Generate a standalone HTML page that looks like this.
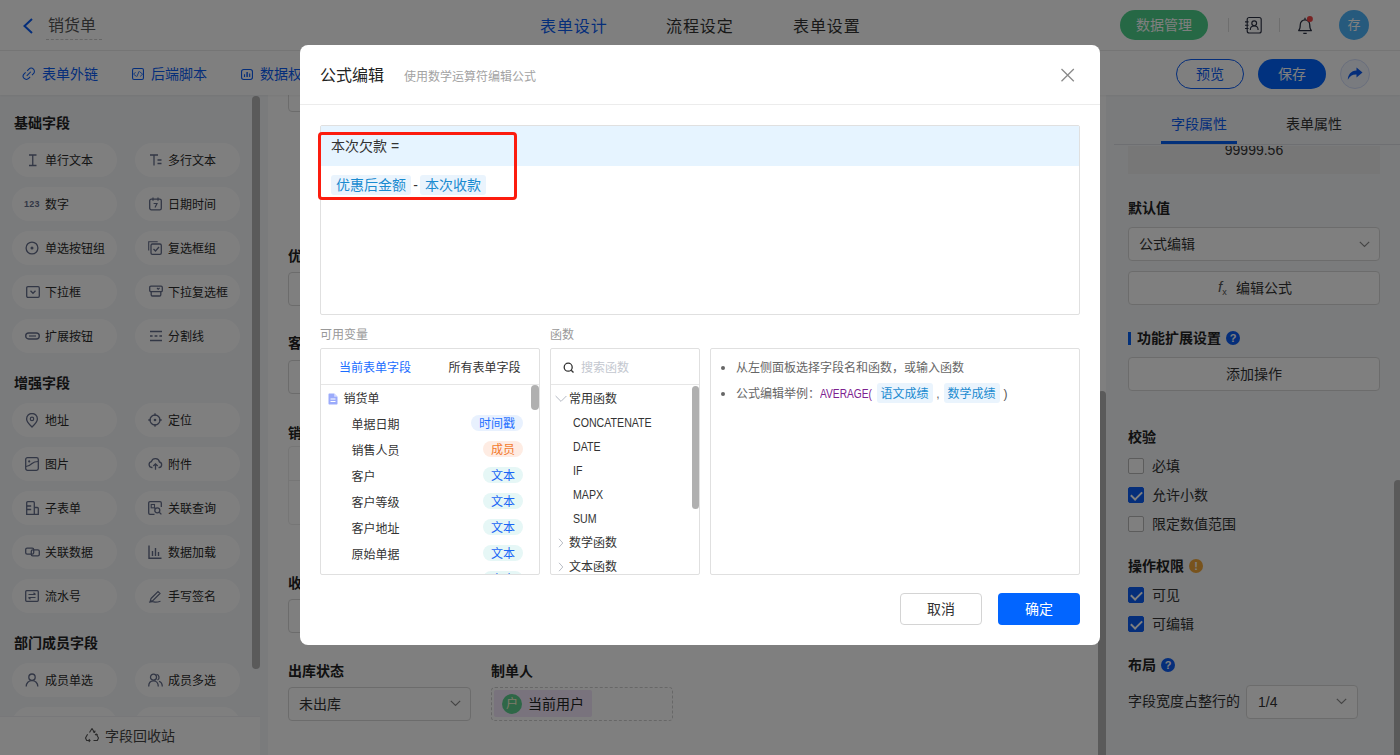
<!DOCTYPE html>
<html lang="zh-CN">
<head>
<meta charset="utf-8">
<title>销货单 - 公式编辑</title>
<style>
*{box-sizing:border-box;margin:0;padding:0}
html,body{width:1400px;height:755px;overflow:hidden;background:#fff}
body{font-family:"Liberation Sans","Noto Sans CJK SC",sans-serif;font-size:14px;color:#333;position:relative}
.abs{position:absolute}
svg{display:block}
/* ---------- page behind ---------- */
#hdr{position:absolute;left:0;top:0;width:1400px;height:51px;background:#fff;border-bottom:1px solid #ebebeb}
#bar{position:absolute;left:0;top:51px;width:1400px;height:44px;background:#fff;box-shadow:0 1px 2px rgba(0,0,0,.05);z-index:1}
#side{position:absolute;left:0;top:95px;width:268px;height:660px;background:#f4f6f9}
#canvas{position:absolute;left:268px;top:95px;width:838px;height:660px;background:#fff}
#form{position:absolute;left:268px;top:95px;width:832px;height:660px;background:#fff;overflow:hidden}
#ptrack{position:absolute;left:1098px;top:391px;width:8px;height:380px;background:#b4b4b4;border-radius:4px}
#prop{position:absolute;left:1106px;top:95px;width:294px;height:660px;background:#f4f6f9}
.t{position:absolute;white-space:nowrap;line-height:20px}
.b{font-weight:bold}
.pill{position:absolute;width:105px;height:34px;border-radius:17px;background:#fff;font-size:12px;line-height:34px;color:#2a2a2a}
.pill span{position:absolute;left:33px;top:1px;white-space:nowrap}
.pill svg{position:absolute;left:14px;top:10px}
.sec{position:absolute;left:14px;font-size:14px;font-weight:bold;color:#222;line-height:20px;white-space:nowrap}
.inp{position:absolute;border:1px solid #d9d9d9;border-radius:4px;background:#fff}
.cb{position:absolute;width:16px;height:16px;border:1px solid #b8b8b8;border-radius:2px;background:#fff}
.cb.on{background:#0a5cf5;border-color:#0a5cf5}
.cb.on:after{content:"";position:absolute;left:4px;top:1px;width:5px;height:9px;border:solid #fff;border-width:0 2px 2px 0;transform:rotate(45deg)}
.lbl{position:absolute;font-size:14px;line-height:20px;color:#333;white-space:nowrap}
.ph{position:absolute;font-size:14px;line-height:20px;font-weight:bold;color:#222;white-space:nowrap}
.qi{width:14px;height:14px;border-radius:7px;background:#0a5cf5;color:#fff;font-size:11px;font-weight:bold;line-height:14px;text-align:center;font-family:"Liberation Sans",sans-serif}
/* ---------- overlay + modal ---------- */
#mask{position:absolute;left:0;top:0;width:1400px;height:755px;background:rgba(0,0,0,.5);z-index:5}
#modal{position:absolute;left:300px;top:45px;width:800px;height:600px;background:#fff;border-radius:8px;z-index:6}
#modal .t{color:#333}
.tag{display:inline-block;background:#eaf4fd;color:#1a8bd0;border-radius:3px;padding:0 5px;height:20px;line-height:20px;vertical-align:top}
.vrow{position:absolute;left:0;width:212px;height:26px;font-size:12px;line-height:26px}
.vrow .n{position:absolute;left:30.5px;top:0;white-space:nowrap;color:#333}
.vrow .k{position:absolute;right:10px;top:3px;height:16px;line-height:18px;border-radius:8px;padding:0 8px;font-size:12px;white-space:nowrap}
.k.tx{background:#e6f7f6;color:#1a66f5}
.k.ts{background:#e8f1fe;color:#1f6fff}
.k.mb{background:#feece3;color:#f27a2e}
.fn{position:absolute;font-size:12px;line-height:24px;color:#333;white-space:nowrap}
</style>
</head>
<body>
<!-- ================= HEADER ================= -->
<div id="hdr">
  <svg class="abs" style="left:21px;top:17px" width="14" height="18" viewBox="0 0 14 18"><path d="M11 2 L3.5 9 L11 16" fill="none" stroke="#0a5cf5" stroke-width="2"/></svg>
  <div class="t" style="left:48px;top:15px;font-size:16px;line-height:22px;color:#555">销货单</div>
  <div class="abs" style="left:46px;top:39px;width:56px;border-top:1px dashed #ccc"></div>
  <div class="t" style="left:540px;top:15.5px;font-size:16px;line-height:22px;letter-spacing:.9px;color:#0a5cf5">表单设计</div>
  <div class="t" style="left:666px;top:15.5px;font-size:16px;line-height:22px;letter-spacing:.9px;color:#333">流程设定</div>
  <div class="t" style="left:793px;top:15.5px;font-size:16px;line-height:22px;letter-spacing:.9px;color:#333">表单设置</div>
  <div class="abs" style="left:1120px;top:10px;width:88px;height:30px;border-radius:15px;background:#4cd18b;color:#fff;font-size:14px;line-height:30px;text-align:center">数据管理</div>
  <div class="abs" style="left:1228px;top:18px;width:1px;height:14px;background:#ddd"></div>
  <div class="abs" style="left:1279px;top:18px;width:1px;height:14px;background:#ddd"></div>
  <svg class="abs" style="left:1244px;top:16px" width="20" height="18" viewBox="0 0 20 18"><rect x="3.200" y="1.500" width="14" height="15.500" rx="2" fill="none" stroke="#2b3042" stroke-width="1.150"/><path d="M1 5.900h3.600M1 9.200h3.600M1 12.500h3.600" stroke="#2b3042" stroke-width="1.150"/><circle cx="10.200" cy="7.300" r="2.400" fill="none" stroke="#2b3042" stroke-width="1.150"/><path d="M6.300 13.900c0-2.500 1.700-3.900 3.900-3.900s3.900 1.400 3.900 3.900" fill="none" stroke="#2b3042" stroke-width="1.150"/></svg>
  <svg class="abs" style="left:1296px;top:15px" width="18" height="20" viewBox="0 0 18 20"><path d="M2.600 15.600C4 14.300 4.300 12.800 4.300 9.600a4.700 4.700 0 0 1 9.400 0c0 3.200.300 4.700 1.700 6z" fill="none" stroke="#2b3042" stroke-width="1.200" stroke-linejoin="round"/><path d="M7.300 18.300h3.400M9 2.800v2" stroke="#2b3042" stroke-width="1.200" fill="none"/><circle cx="13.900" cy="4.100" r="3" fill="#f04646"/></svg>
  <div class="abs" style="left:1339px;top:10px;width:30px;height:30px;border-radius:15px;background:#4db4fb;color:#fff;font-size:13px;line-height:30px;text-align:center">存</div>
</div>
<!-- ================= TOOLBAR ================= -->
<div id="bar">
  <svg class="abs" style="left:22px;top:16px" width="14" height="14" viewBox="0 0 14 14"><g transform="translate(6.800 6.800) rotate(-45)" fill="none" stroke="#0a5cf5" stroke-width="1.050"><path d="M.9-3.200H3.400A3.200 3.200 0 0 1 3.400 3.200H1.300M-1.300-3.200H-3.400A3.200 3.200 0 0 0-3.400 3.200H-1.300M-2.900 0H2.900"/></g></svg>
  <div class="t" style="left:42px;top:13px;font-size:14px;color:#0a5cf5">表单外链</div>
  <svg class="abs" style="left:132px;top:17px" width="12" height="12" viewBox="0 0 12 12"><rect x=".55" y=".55" width="10.900" height="10.900" rx="1.500" fill="none" stroke="#0a5cf5" stroke-width="1.100"/><path d="M3.500 4.200L1.600 6.200 4.400 8.400M7.200 3.200L4.800 8.700M7.600 3.600L10.600 6.200 8.200 8.400" fill="none" stroke="#0a5cf5" stroke-width=".85"/></svg>
  <div class="t" style="left:151px;top:13px;font-size:14px;color:#0a5cf5">后端脚本</div>
  <svg class="abs" style="left:241px;top:18px" width="12" height="11" viewBox="0 0 12 11"><rect x=".55" y=".55" width="10.900" height="9.900" rx="2.200" fill="none" stroke="#0a5cf5" stroke-width="1.100"/><path d="M3.500 5.200V7.900M8.700 4.600V7.900" stroke="#0a5cf5" stroke-width="1.100"/><path d="M6.100 3V7.900" stroke="#0a5cf5" stroke-width="1.400"/></svg>
  <div class="t" style="left:260px;top:13px;font-size:14px;color:#0a5cf5">数据权限</div>
  <div class="abs" style="left:1176px;top:8px;width:68px;height:30px;border:1px solid #0a5cf5;border-radius:15px;color:#0a5cf5;font-size:14px;line-height:28px;text-align:center">预览</div>
  <div class="abs" style="left:1258px;top:8px;width:68px;height:30px;border-radius:15px;background:#0265ff;color:#fff;font-size:14px;line-height:30px;text-align:center">保存</div>
  <div class="abs" style="left:1340px;top:8px;width:30px;height:30px;border-radius:15px;background:#f3f6fe;border:1px solid #d3defa"></div>
  <svg class="abs" style="left:1347px;top:16px" width="16" height="14" viewBox="0 0 16 14"><path d="M9.5 0.5 L15.5 5.5 L9.5 10.5 V7.6 C5.5 7.4 2.8 9 0.8 12.8 C1 7.6 4 3.8 9.5 3.5 Z" fill="#0a5cf5"/></svg>
</div>
<!-- ================= LEFT SIDEBAR ================= -->
<div id="side">
  <div class="sec" style="top:18px">基础字段</div>
  <div class="pill" style="left:12px;top:48px"><svg width="13" height="14" viewBox="0 0 13 14"><path d="M3 2h7.500M3 12.500h7.500M6.750 2v10.500" fill="none" stroke="#656e8b" stroke-width="1.3"/></svg><span>单行文本</span></div>
  <div class="pill" style="left:135px;top:48px"><svg width="13" height="14" viewBox="0 0 13 14"><path d="M1 2h8M5 2v10.5M8.5 7h4M8.5 10.5h4" fill="none" stroke="#656e8b" stroke-width="1.3"/></svg><span>多行文本</span></div>
  <div class="pill" style="left:12px;top:92px"><div class="abs" style="left:12px;top:0;font-size:9px;font-weight:bold;color:#656e8b;letter-spacing:.2px;font-family:'Liberation Sans',sans-serif">123</div><span>数字</span></div>
  <div class="pill" style="left:135px;top:92px"><svg width="13" height="14" viewBox="0 0 13 14"><rect x=".7" y="2.2" width="11.6" height="10.6" rx="1.6" fill="none" stroke="#656e8b" stroke-width="1.3"/><path d="M4 .5v3.2M9 .5v3.2M4.6 6.5h3.4l-2 4" fill="none" stroke="#656e8b" stroke-width="1.2"/></svg><span>日期时间</span></div>
  <div class="pill" style="left:12px;top:136px"><svg style="left:13px" width="14" height="14" viewBox="0 0 14 14"><circle cx="7" cy="7" r="5.9" fill="none" stroke="#656e8b" stroke-width="1.3"/><circle cx="7" cy="7" r="1.5" fill="#656e8b"/></svg><span>单选按钮组</span></div>
  <div class="pill" style="left:135px;top:136px"><svg style="left:13px" width="14" height="14" viewBox="0 0 14 14"><path d="M.7 9.5V.7h9" fill="none" stroke="#656e8b" stroke-width="1.1"/><rect x="3" y="3" width="10.3" height="10.3" rx="1.4" fill="none" stroke="#656e8b" stroke-width="1.3"/><path d="M5.5 8l2 2 3.5-4" fill="none" stroke="#656e8b" stroke-width="1.3"/></svg><span>复选框组</span></div>
  <div class="pill" style="left:12px;top:180px"><svg width="14" height="14" viewBox="0 0 14 14"><rect x=".7" y="1.7" width="12.6" height="10.6" rx="1.2" fill="none" stroke="#656e8b" stroke-width="1.3"/><path d="M4.5 5.8L7 8.3l2.5-2.5" fill="none" stroke="#656e8b" stroke-width="1.3"/></svg><span>下拉框</span></div>
  <div class="pill" style="left:135px;top:180px"><svg width="14" height="14" viewBox="0 0 14 14"><rect x=".7" y="1.2" width="12.6" height="5.4" rx="1.2" fill="none" stroke="#656e8b" stroke-width="1.3"/><path d="M2.2 6.6v3.2a1.2 1.2 0 0 0 1.2 1.2h7.2a1.2 1.2 0 0 0 1.2-1.2V6.6" fill="none" stroke="#656e8b" stroke-width="1.3"/><path d="M8 3l1.2 1.2L10.6 3" fill="none" stroke="#656e8b" stroke-width="1.1"/></svg><span>下拉复选框</span></div>
  <div class="pill" style="left:12px;top:224px"><svg style="left:13px" width="15" height="14" viewBox="0 0 15 14"><rect x=".7" y="4" width="13.6" height="6" rx="3" fill="none" stroke="#656e8b" stroke-width="1.4"/><path d="M4 7h7" stroke="#656e8b" stroke-width="1.2"/></svg><span>扩展按钮</span></div>
  <div class="pill" style="left:135px;top:224px"><svg width="14" height="14" viewBox="0 0 14 14"><path d="M1 2.5h12M1 11.5h12M1 7h2.6M5.6 7h2.8M10.4 7H13" fill="none" stroke="#656e8b" stroke-width="1.3"/></svg><span>分割线</span></div>

  <div class="sec" style="top:278px">增强字段</div>
  <div class="pill" style="left:12px;top:308px"><svg style="left:13px" width="14" height="15" viewBox="0 0 14 15"><path d="M7 14C3.5 10.6 1.6 8.2 1.6 5.9a5.4 5.4 0 0 1 10.8 0C12.400 8.200 10.500 10.600 7 14z" fill="none" stroke="#656e8b" stroke-width="1.3"/><circle cx="7" cy="5.900" r="1.7" fill="none" stroke="#656e8b" stroke-width="1.2"/></svg><span>地址</span></div>
  <div class="pill" style="left:135px;top:308px"><svg style="left:13px" width="14" height="14" viewBox="0 0 14 14"><circle cx="7" cy="7" r="5" fill="none" stroke="#656e8b" stroke-width="1.3"/><circle cx="7" cy="7" r="1.3" fill="#656e8b"/><path d="M7 .3v2.6M7 11.100v2.600M.3 7h2.600M11.100 7h2.600" stroke="#656e8b" stroke-width="1.3"/></svg><span>定位</span></div>
  <div class="pill" style="left:12px;top:352px"><svg style="left:13px" width="14" height="14" viewBox="0 0 14 14"><rect x=".7" y=".7" width="12.6" height="12.6" rx="1.8" fill="none" stroke="#656e8b" stroke-width="1.3"/><circle cx="4.200" cy="4.400" r="1.1" fill="#656e8b"/><path d="M1 9.500c3-.4 4.500-1.600 6-3 1.800-1.600 3.600-2 6-2" fill="none" stroke="#656e8b" stroke-width="1.2"/></svg><span>图片</span></div>
  <div class="pill" style="left:135px;top:352px"><svg style="left:13px" width="15" height="14" viewBox="0 0 15 14"><path d="M4.500 10.500H3.800A3 3 0 0 1 3.400 4.600 4.200 4.200 0 0 1 11.500 5a2.800 2.800 0 0 1-.3 5.500h-.7" fill="none" stroke="#656e8b" stroke-width="1.3"/><path d="M7.500 12.800V7M5.300 9l2.200-2.200L9.700 9" fill="none" stroke="#656e8b" stroke-width="1.3"/></svg><span>附件</span></div>
  <div class="pill" style="left:12px;top:396px"><svg style="left:13px" width="14" height="14" viewBox="0 0 14 14"><path d="M1.700 13.300V1.700a1 1 0 0 1 1-1h5.600a1 1 0 0 1 1 1v11.600zM9.300 6.500h3a1 1 0 0 1 1 1v5.800h-4M1.700 5h4.500M1.700 8.500h4.500" fill="none" stroke="#656e8b" stroke-width="1.3"/></svg><span>子表单</span></div>
  <div class="pill" style="left:135px;top:396px"><svg style="left:13px" width="14" height="14" viewBox="0 0 14 14"><path d="M13.300 6V2a1.300 1.300 0 0 0-1.300-1.300H2A1.300 1.300 0 0 0 .7 2v10A1.300 1.300 0 0 0 2 13.300h4.500" fill="none" stroke="#656e8b" stroke-width="1.3"/><rect x="3.200" y="3.500" width="3.300" height="3.300" fill="none" stroke="#656e8b" stroke-width="1.1"/><circle cx="9.300" cy="9.300" r="2.500" fill="none" stroke="#656e8b" stroke-width="1.300"/><path d="M11.200 11.200l2.200 2.200M6.500 6.800l1.200 1" stroke="#656e8b" stroke-width="1.300"/></svg><span>关联查询</span></div>
  <div class="pill" style="left:12px;top:440px"><svg style="left:13px" width="15" height="14" viewBox="0 0 15 14"><rect x=".7" y="3.200" width="8" height="6" rx="1.400" fill="none" stroke="#656e8b" stroke-width="1.300"/><rect x="6.300" y="4.800" width="8" height="6" rx="1.400" fill="none" stroke="#656e8b" stroke-width="1.300"/></svg><span>关联数据</span></div>
  <div class="pill" style="left:135px;top:440px"><svg style="left:13px" width="14" height="14" viewBox="0 0 14 14"><path d="M1 .5v12.800h12.500M4.500 11V6M7.500 11V3M10.500 11V7" fill="none" stroke="#656e8b" stroke-width="1.400"/></svg><span>数据加载</span></div>
  <div class="pill" style="left:12px;top:484px"><svg style="left:13px" width="14" height="14" viewBox="0 0 14 14"><rect x=".7" y="1.700" width="12.600" height="10.600" rx="1" fill="none" stroke="#656e8b" stroke-width="1.300"/><path d="M3.500 5.500h7M8.500 3.800l2 1.700M3.500 8.500h7M5.500 10.200l-2-1.700" fill="none" stroke="#656e8b" stroke-width="1.200"/></svg><span>流水号</span></div>
  <div class="pill" style="left:135px;top:484px"><svg style="left:13px" width="14" height="14" viewBox="0 0 14 14"><path d="M3 9.500L10 2.500l2 2-7 7-2.800.800zM1 13.300c2-.8 3.500-.9 5-.4s3.500.3 6.500-.700" fill="none" stroke="#656e8b" stroke-width="1.200"/></svg><span>手写签名</span></div>

  <div class="sec" style="top:538px">部门成员字段</div>
  <div class="pill" style="left:12px;top:568px"><svg style="left:13px" width="14" height="14" viewBox="0 0 14 14"><circle cx="7" cy="4.200" r="3.200" fill="none" stroke="#656e8b" stroke-width="1.300"/><path d="M1.200 13.500c0-3.600 2.400-5.800 5.800-5.800s5.800 2.200 5.800 5.800" fill="none" stroke="#656e8b" stroke-width="1.300"/></svg><span>成员单选</span></div>
  <div class="pill" style="left:135px;top:568px"><svg style="left:13px" width="15" height="14" viewBox="0 0 15 14"><circle cx="5.500" cy="4.200" r="3" fill="none" stroke="#656e8b" stroke-width="1.300"/><path d="M.7 13.500c0-3.400 2-5.600 4.800-5.600s4.800 2.200 4.800 5.600M8.500 1.400a3 3 0 0 1 1 5.600M11 8.300c2 .6 3.300 2.500 3.300 5.200" fill="none" stroke="#656e8b" stroke-width="1.300"/></svg><span>成员多选</span></div>
  <div class="pill" style="left:12px;top:612px"></div>
  <div class="pill" style="left:135px;top:612px"></div>
  <div class="abs" style="left:252px;top:1px;width:8px;height:573px;border-radius:4px;background:#b4b4b4"></div>
  <div class="abs" style="left:0;top:621px;width:260px;height:39px;background:#fff;border-top:1px solid #f0f1f4"></div>
  <svg class="abs" style="left:84px;top:632px" width="16" height="16" viewBox="0 0 16 16"><g fill="none" stroke="#555" stroke-width="1.100" stroke-linejoin="round"><path d="M5.500 5.500L8 1.500l2.500 4M3.600 7.200L1.500 11l1.200 2.500h3.300M12.400 7.200L14.500 11l-1.200 2.500H9.500"/><path d="M9 4.500l1.600 1 .5-1.800M4.800 12l1.300 1.500L4.800 15M13.600 8.200l-1.300-1.200-1.300 1"/></g></svg>
  <div class="t" style="left:105px;top:631px;font-size:14px;color:#444">字段回收站</div>
</div>
<!-- ================= CANVAS / FORM ================= -->
<div id="canvas"></div>
<div id="form">
  <div class="inp" style="left:20px;top:-17px;width:183px;height:34px"></div>
  <div class="t b" style="left:20px;top:151px;color:#222">优惠后金额</div>
  <div class="inp" style="left:20px;top:177px;width:183px;height:34px"></div>
  <div class="t b" style="left:20px;top:238px;color:#222">客户地址</div>
  <div class="inp" style="left:20px;top:265px;width:183px;height:34px"></div>
  <div class="t b" style="left:20px;top:328px;color:#222">销货明细</div>
  <div class="abs" style="left:20px;top:351px;width:790px;height:79px;border:1px solid #ededed;border-radius:4px"></div>
  <div class="abs" style="left:20px;top:385px;width:790px;height:1px;background:#ededed"></div>
  <div class="t b" style="left:20px;top:478px;color:#222">收款账户</div>
  <div class="inp" style="left:20px;top:504px;width:183px;height:34px"></div>
  <div class="t b" style="left:20px;top:566px;color:#222">出库状态</div>
  <div class="inp" style="left:20px;top:592px;width:183px;height:34px"></div>
  <div class="t" style="left:31px;top:599px;color:#333">未出库</div>
  <svg class="abs" style="left:182px;top:605px" width="11" height="7" viewBox="0 0 11 7"><path d="M.8.800l4.700 4.700L10.200.8" fill="none" stroke="#8a8a8a" stroke-width="1.200"/></svg>
  <div class="t b" style="left:223px;top:566px;color:#222">制单人</div>
  <div class="abs" style="left:223px;top:592px;width:182px;height:34px;border:1px dashed #cfcfcf;border-radius:4px"></div>
  <div class="abs" style="left:226px;top:595px;width:98px;height:27px;border-radius:2px;background:#f3e6fb"></div>
  <div class="abs" style="left:234px;top:599px;width:20px;height:20px;border-radius:10px;background:#5dcf8f;color:#fff6d8;font-size:12px;line-height:20px;text-align:center">户</div>
  <div class="t" style="left:260px;top:599px;color:#222">当前用户</div>
</div>
<!-- ================= RIGHT PROPS ================= -->
<div id="ptrack"></div>
<div id="prop">
  <div class="t" style="left:65px;top:19px;font-size:14px;color:#0a5cf5">字段属性</div>
  <div class="t" style="left:180px;top:19px;font-size:14px;color:#333">表单属性</div>
  <div class="abs" style="left:8px;top:49px;width:286px;height:1px;background:#dcdfe4"></div>
  <div class="abs" style="left:55px;top:46px;width:76px;height:3px;background:#0560f5"></div>
  <div class="abs" style="left:22px;top:51px;width:252px;height:28px;background:#efefef;overflow:hidden"><div class="t" style="left:0;width:252px;top:-6px;text-align:center;color:#333;font-size:14px">99999.56</div></div>
  <div class="ph" style="left:22px;top:103px">默认值</div>
  <div class="inp" style="left:22px;top:132px;width:252px;height:34px"></div>
  <div class="t" style="left:33px;top:139px;color:#333">公式编辑</div>
  <svg class="abs" style="left:253px;top:146px" width="11" height="7" viewBox="0 0 11 7"><path d="M.8.800l4.700 4.700L10.200.8" fill="none" stroke="#8a8a8a" stroke-width="1.200"/></svg>
  <div class="inp" style="left:22px;top:176px;width:252px;height:34px"></div>
  <div class="t" style="left:112px;top:182px;color:#555;font-style:italic;font-size:15px">f<span style="font-size:9px;font-style:normal;position:relative;top:3px;left:0">x</span></div>
  <div class="t" style="left:130px;top:183px;color:#333">编辑公式</div>
  <div class="abs" style="left:22px;top:237px;width:3px;height:13px;background:#0560f5"></div>
  <div class="ph" style="left:31px;top:233px">功能扩展设置</div>
  <div class="abs qi" style="left:120px;top:236px">?</div>
  <div class="inp" style="left:22px;top:262px;width:252px;height:34px"></div>
  <div class="t" style="left:22px;width:252px;text-align:center;top:269px;color:#333">添加操作</div>
  <div class="ph" style="left:22px;top:332px">校验</div>
  <div class="cb" style="left:22px;top:363px"></div><div class="lbl" style="left:46px;top:361px">必填</div>
  <div class="cb on" style="left:22px;top:392px"></div><div class="lbl" style="left:46px;top:390px">允许小数</div>
  <div class="cb" style="left:22px;top:421px"></div><div class="lbl" style="left:46px;top:419px">限定数值范围</div>
  <div class="ph" style="left:22px;top:461px">操作权限</div>
  <div class="abs qi" style="left:83px;top:464px;background:#f0a63a">!</div>
  <div class="cb on" style="left:22px;top:492px"></div><div class="lbl" style="left:46px;top:490px">可见</div>
  <div class="cb on" style="left:22px;top:521px"></div><div class="lbl" style="left:46px;top:519px">可编辑</div>
  <div class="ph" style="left:22px;top:560px">布局</div>
  <div class="abs qi" style="left:55px;top:563px">?</div>
  <div class="abs" style="left:288px;top:385px;width:8px;height:290px;border-radius:4px;background:#b4b4b4"></div>
  <div class="t" style="left:22px;top:596px;color:#333">字段宽度占整行的</div>
  <div class="inp" style="left:140px;top:590px;width:112px;height:34px"></div>
  <div class="t" style="left:152px;top:597px;color:#333">1/4</div>
  <svg class="abs" style="left:230px;top:603px" width="11" height="7" viewBox="0 0 11 7"><path d="M.8.800l4.700 4.700L10.200.8" fill="none" stroke="#8a8a8a" stroke-width="1.200"/></svg>
</div>
<!-- ================= MASK ================= -->
<div id="mask"></div>
<!-- ================= MODAL ================= -->
<div id="modal">
  <div class="t" style="left:20px;top:20px;font-size:16px;line-height:22px;color:#222">公式编辑</div>
  <div class="t" style="left:104px;top:23px;font-size:12px;line-height:18px"><span style="color:#a3a3a3">使用数学运算符编辑公式</span></div>
  <svg class="abs" style="left:760px;top:23px" width="15" height="15" viewBox="0 0 15 15"><path d="M1.500 1l12.300 12.300M13.800 1L1.500 13.300" stroke="#8a8a8a" stroke-width="1.3" fill="none"/></svg>
  <div class="abs" style="left:0;top:59px;width:800px;height:1px;background:#ececec"></div>
  <!-- editor -->
  <div class="abs" style="left:20px;top:80px;width:760px;height:190px;border:1px solid #e0e0e0;border-radius:2px;background:#fff">
    <div class="abs" style="left:0;top:0;width:758px;height:40px;background:#e6f4ff"></div>
    <div class="t" style="left:10px;top:10px;font-size:14px;line-height:20px;color:#333">本次欠款 =</div>
    <div class="t" style="left:10px;top:49px;font-size:14px;line-height:20px;color:#333"><span class="tag">优惠后金额</span><span style="display:inline-block;width:9px;text-align:center">-</span><span class="tag">本次收款</span></div>
  </div>
  <div class="abs" style="left:18px;top:87px;width:199px;height:68px;border:3px solid #fc1c0e;border-radius:4px"></div>
  <!-- labels -->
  <div class="t" style="left:20px;top:281px;font-size:12px;line-height:18px"><span style="color:#999">可用变量</span></div>
  <div class="t" style="left:250px;top:281px;font-size:12px;line-height:18px"><span style="color:#999">函数</span></div>
  <!-- variables panel -->
  <div class="abs" style="left:20px;top:303px;width:220px;height:227px;border:1px solid #e0e0e0;border-radius:2px;overflow:hidden">
    <div class="t" style="left:18px;top:10px;font-size:12px;line-height:18px"><span style="color:#1a6dff">当前表单字段</span></div>
    <div class="t" style="left:127.500px;top:10px;font-size:12px;line-height:18px">所有表单字段</div>
    <div class="abs" style="left:0;top:35px;width:218px;height:1px;background:#e6e6e6"></div>
    <div class="abs" style="left:210px;top:36px;width:8px;height:25px;border-radius:4px;background:#b0b0b0"></div>
    <svg class="abs" style="left:7px;top:44px" width="10" height="12" viewBox="0 0 10 12"><path d="M1.2 0.500h5L9.500 3.800V10.800a.7.700 0 0 1-.7.700H1.200a.7.700 0 0 1-.7-.7V1.200a.7.700 0 0 1 .7-.7z" fill="#9babfb"/><path d="M2.500 6h5M2.500 8.500h5" stroke="#fff" stroke-width="1"/><path d="M6.200.5v3.300h3.300z" fill="#d3daff"/></svg>
    <div class="t" style="left:22.5px;top:41px;font-size:12px;line-height:18px">销货单</div>
    <div class="vrow" style="top:63px"><span class="n">单据日期</span><span class="k ts">时间戳</span></div>
    <div class="vrow" style="top:89px"><span class="n">销售人员</span><span class="k mb">成员</span></div>
    <div class="vrow" style="top:115px"><span class="n">客户</span><span class="k tx">文本</span></div>
    <div class="vrow" style="top:141px"><span class="n">客户等级</span><span class="k tx">文本</span></div>
    <div class="vrow" style="top:167px"><span class="n">客户地址</span><span class="k tx">文本</span></div>
    <div class="vrow" style="top:193px"><span class="n">原始单据</span><span class="k tx">文本</span></div>
    <div class="vrow" style="top:219px"><span class="n" style="top:6px">订单编号</span><span class="k tx">文本</span></div>
  </div>
  <!-- functions panel -->
  <div class="abs" style="left:250px;top:303px;width:150px;height:227px;border:1px solid #e0e0e0;border-radius:2px;overflow:hidden">
    <svg class="abs" style="left:12px;top:13px" width="12" height="12" viewBox="0 0 12 12"><circle cx="5.200" cy="5.200" r="4" fill="none" stroke="#333" stroke-width="1.300"/><path d="M8.200 8.200l2.300 2.300" stroke="#333" stroke-width="1.300"/></svg>
    <div class="t" style="left:30px;top:10px;font-size:12px;line-height:18px"><span style="color:#c3c7cf">搜索函数</span></div>
    <div class="abs" style="left:0;top:35px;width:148px;height:1px;background:#e6e6e6"></div>
    <div class="abs" style="left:140.500px;top:37px;width:7.500px;height:123px;border-radius:4px;background:#b0b0b0"></div>
    <svg class="abs" style="left:4px;top:46px" width="12" height="8" viewBox="0 0 12 8"><path d="M.6 1l5.400 5.400L11.400 1" fill="none" stroke="#b3b8c2" stroke-width="1"/></svg>
    <div class="fn" style="left:18px;top:38px">常用函数</div>
    <div class="fn" style="left:22px;top:62px;transform:scaleX(.885);transform-origin:0 50%">CONCATENATE</div>
    <div class="fn" style="left:22px;top:86px;transform:scaleX(.885);transform-origin:0 50%">DATE</div>
    <div class="fn" style="left:22px;top:110px;transform:scaleX(.885);transform-origin:0 50%">IF</div>
    <div class="fn" style="left:22px;top:134px;transform:scaleX(.885);transform-origin:0 50%">MAPX</div>
    <div class="fn" style="left:22px;top:158px;transform:scaleX(.885);transform-origin:0 50%">SUM</div>
    <svg class="abs" style="left:7px;top:189px" width="6" height="10" viewBox="0 0 6 10"><path d="M1 .8l3.800 4.200L1 9.200" fill="none" stroke="#b9bdc5" stroke-width="1"/></svg>
    <div class="fn" style="left:18px;top:182px">数学函数</div>
    <svg class="abs" style="left:7px;top:213px" width="6" height="10" viewBox="0 0 6 10"><path d="M1 .8l3.800 4.200L1 9.200" fill="none" stroke="#b9bdc5" stroke-width="1"/></svg>
    <div class="fn" style="left:18px;top:206px">文本函数</div>
  </div>
  <!-- info panel -->
  <div class="abs" style="left:410px;top:303px;width:370px;height:227px;border:1px solid #e0e0e0;border-radius:2px">
    <div class="abs" style="left:10px;top:17px;width:4px;height:4px;border-radius:2px;background:#666"></div>
    <div class="t" style="left:25px;top:10px;font-size:12px;line-height:18px"><span style="color:#666">从左侧面板选择字段名和函数，或输入函数</span></div>
    <div class="abs" style="left:10px;top:43px;width:4px;height:4px;border-radius:2px;background:#666"></div>
    <div class="t" style="left:25px;top:35px;font-size:12px;line-height:20px"><span style="color:#666">公式编辑举例：</span><span style="display:inline-block;width:51px;vertical-align:top"><span style="display:inline-block;color:#7d2090;transform:scaleX(.85);transform-origin:0 50%">AVERAGE(</span></span><span class="tag" style="font-size:12px;height:20px;line-height:22px;padding:0 4px;margin-left:5.5px;position:relative;top:-1px">语文成绩</span><span style="color:#666;display:inline-block;width:11px;text-align:center">,</span><span class="tag" style="font-size:12px;height:20px;line-height:22px;padding:0 4px;position:relative;top:-1px">数学成绩</span><span style="color:#555;margin-left:4px">)</span></div>
  </div>
  <!-- buttons -->
  <div class="abs" style="left:600px;top:548px;width:82px;height:32px;border:1px solid #d4d4d4;border-radius:4px;font-size:14px;line-height:30px;text-align:center;color:#333">取消</div>
  <div class="abs" style="left:698px;top:548px;width:82px;height:32px;border-radius:4px;background:#0265ff;font-size:14px;line-height:32px;text-align:center;color:#fff">确定</div>
</div>
</body>
</html>
